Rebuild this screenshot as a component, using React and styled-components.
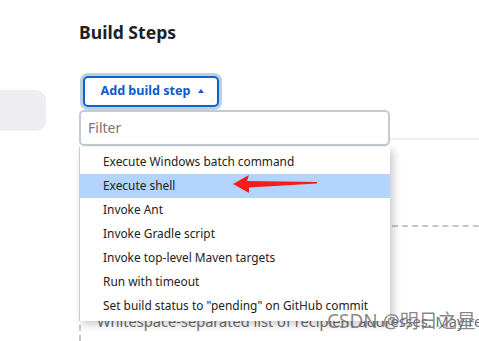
import React from "react";
import styled, { createGlobalStyle } from "styled-components";

const Global = createGlobalStyle`
  html, body { margin: 0; padding: 0; background: #ffffff; overflow: hidden; }
  body { font-family: "Noto Sans", "Open Sans", sans-serif; color: #1e1e2a; }
`;

const Page = styled.div`
  position: relative;
  display: grid;
  grid-template-columns: 79px 1fr;
  width: 479px;
  height: 341px;
  overflow: hidden;
`;

const Sidebar = styled.div`
  padding-top: 90px;
`;

const NavPill = styled.div`
  width: 56px;
  height: 41px;
  margin-left: -10px;
  background: #ededf2;
  border-radius: 10px;
`;

const Main = styled.div`
  position: relative;
  min-width: 0;
  padding-top: 20px;
`;

const Title = styled.h2`
  margin: 0;
  font: 700 17.6px/24px "Noto Sans", sans-serif;
  color: #1e1e2a;
`;

const StepArea = styled.div`
  position: relative;
  margin-top: 32px;
`;

const AddButton = styled.button`
  display: flex;
  align-items: center;
  justify-content: center;
  gap: 7px;
  width: 136px;
  height: 31px;
  margin: 0 0 0 4px;
  padding: 0 0 0 2px;
  background: #ffffff;
  border: 2px solid #0d63d2;
  border-radius: 5px;
  box-shadow: 0 0 0 3px #bcd0e4;
  color: #0b5ccc;
  font: 700 12.6px/1 "Noto Sans", sans-serif;
  cursor: pointer;
`;

const Caret = styled.span`
  width: 0;
  height: 0;
  border-left: 3.5px solid transparent;
  border-right: 3.5px solid transparent;
  border-bottom: 4px solid #0b5ccc;
  margin-top: -1px;
`;

const Dropdown = styled.div`
  position: absolute;
  top: 34px;
  left: 0;
  width: 311px;
  z-index: 2;
`;

const FilterBox = styled.div`
  box-sizing: border-box;
  height: 36px;
  padding-left: 7px;
  display: flex;
  align-items: center;
  background: #ffffff;
  border: 2px solid #c3ccd3;
  border-radius: 5px;
  color: #767676;
  font: 400 14px/1 "Noto Sans", sans-serif;
`;

const Menu = styled.ul`
  list-style: none;
  margin: 1px 0 0;
  padding: 3px 0;
  width: 310px;
  background: #ffffff;
  border-left: 1px solid #c9ccd0;
  box-shadow: 3px 3px 8px rgba(0, 0, 0, 0.22);
`;

const MenuItem = styled.li`
  height: 24px;
  padding-left: 23px;
  display: flex;
  align-items: center;
  font: 400 11.9px/1 "Noto Sans", sans-serif;
  color: #222222;
  background: ${(p) => (p.$active ? "#b3d4fc" : "transparent")};
`;

const Divider = styled.div`
  height: 2px;
  margin-top: 31px;
  background: #eeeff3;
`;

const DashedBox = styled.div`
  margin-top: 85px;
  margin-right: -20px;
  padding: 84px 0 0 16px;
  border-top: 2px dashed #c6c6c6;
  border-left: 2px dashed #c6c6c6;
  min-height: 60px;
`;

const HelpText = styled.p`
  margin: 0;
  white-space: nowrap;
  font: 400 14.6px/20px "Noto Sans", sans-serif;
  color: #6b6b73;
`;

const Arrow = styled.svg`
  position: absolute;
  left: 230px;
  top: 170px;
  z-index: 3;
`;

const Watermark = styled.div`
  position: absolute;
  left: 327px;
  top: 309px;
  z-index: 4;
  white-space: nowrap;
  font: 400 19px/24px "Noto Sans", "Noto Sans CJK SC", sans-serif;
  color: rgba(115, 115, 115, 0.85);
`;

const items = [
  "Execute Windows batch command",
  "Execute shell",
  "Invoke Ant",
  "Invoke Gradle script",
  "Invoke top-level Maven targets",
  "Run with timeout",
  'Set build status to "pending" on GitHub commit',
];

export default function App() {
  return (
    <>
      <Global />
      <Page>
        <Sidebar>
          <NavPill />
        </Sidebar>
        <Main>
          <Title>Build Steps</Title>
          <StepArea>
            <AddButton>
              Add build step <Caret />
            </AddButton>
            <Dropdown>
              <FilterBox>Filter</FilterBox>
              <Menu>
                {items.map((t, i) => (
                  <MenuItem key={t} $active={i === 1}>
                    {t}
                  </MenuItem>
                ))}
              </Menu>
            </Dropdown>
            <Divider />
            <DashedBox>
              <HelpText>
                Whitespace-separated list of recipient addresses. May reference build parameters like $PARAM.
              </HelpText>
            </DashedBox>
          </StepArea>
        </Main>
        <Arrow width="90" height="26" viewBox="0 0 90 26">
          <path d="M3 14 L19 5 L17 11 L87 12 L87 13.5 L19 17.5 L19 23 Z" fill="#f41c1c" />
        </Arrow>
        <Watermark>CSDN @明日之星</Watermark>
      </Page>
    </>
  );
}
